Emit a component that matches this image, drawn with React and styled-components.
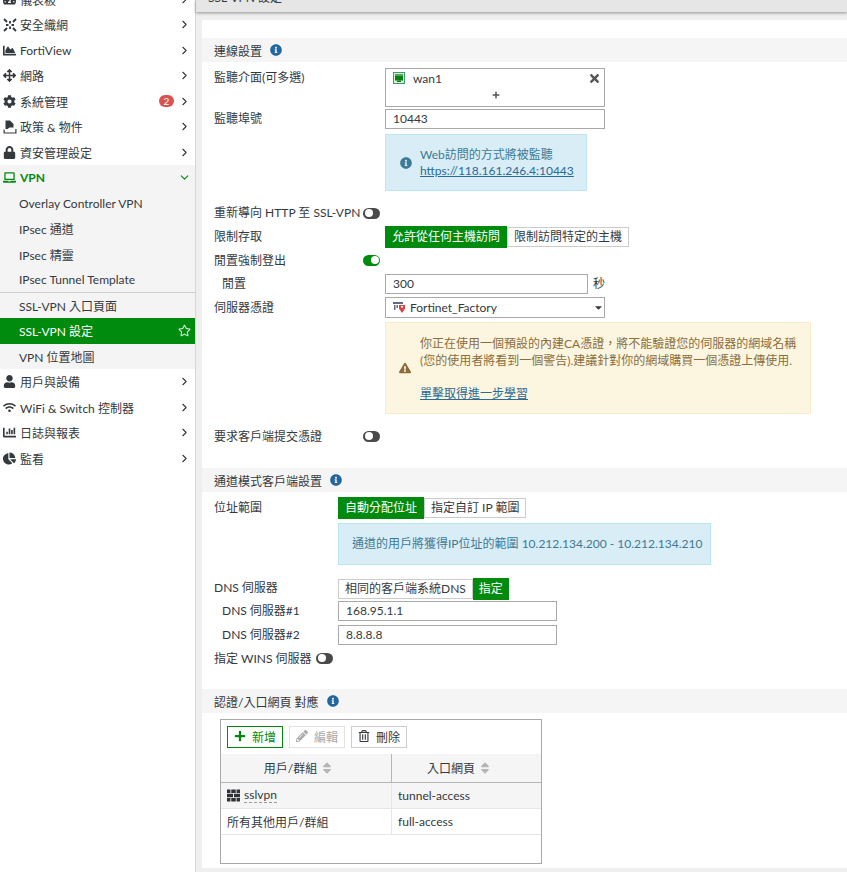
import React from 'react'
import styled, { createGlobalStyle } from 'styled-components'
import { ChevronRight, ChevronDown } from 'lucide-react'
import {
  FaCog, FaLock, FaLaptop, FaUser, FaWifi, FaChartBar, FaChartPie, FaChartArea, FaArrowsAlt,
  FaRegStar, FaInfoCircle, FaExclamationTriangle, FaTimes, FaPlus, FaPencilAlt, FaRegTrashAlt,
  FaSort, FaCaretDown, FaTachometerAlt,
} from 'react-icons/fa'

const GlobalStyle = createGlobalStyle`
  html, body { margin: 0; padding: 0; height: 100%; overflow: hidden; background: #fff; }
  body {
    font-family: Lato, "Noto Sans CJK TC", sans-serif;
    font-size: 12px;
    color: #34393d;
  }
  * { box-sizing: border-box; }
`

function FabricIcon() {
  return (
    <svg width="14" height="14" viewBox="0 0 14 14" fill="none" stroke="currentColor" strokeWidth="1.9">
      <path d="M1 1l3 3M13 1l-3 3M1 13l3-3M13 13l-3-3M7 3v2.5M7 8.5V11M3 7h2.5M8.5 7H11" />
    </svg>
  )
}

function PolicyIcon() {
  return (
    <svg width="14" height="14" viewBox="0 0 14 14" fill="currentColor">
      <path d="M2.5 .5H7l3.5 3.5v3.5H6.5L4.5 9H2.5z" />
      <path d="M.5 9.5h1.2v3h10.6V9H13.5v4.5H.5z" />
    </svg>
  )
}

function WanIcon() {
  return (
    <svg width="12" height="12" viewBox="0 0 12 12">
      <rect x="0.5" y="0.5" width="11" height="11" fill="#d8efd8" stroke="#3d9c6d" />
      <rect x="2" y="2" width="8" height="6.5" fill="#0d7f12" />
      <path d="M3 2v2M5 2v2M7 2v2M9 2v2" stroke="#bfe6bf" strokeWidth="0.8" />
      <rect x="4" y="8.5" width="4" height="1.5" fill="#0d7f12" />
    </svg>
  )
}

function CertIcon() {
  return (
    <svg width="13" height="12" viewBox="0 0 13 12">
      <rect x="0" y="0" width="10" height="2" fill="#5c6b80" />
      <path d="M1 3h1.5v5H1zM3.5 3H5v3H3.5z" fill="#5c6b80" />
      <path d="M6 3h6v3.5L9 11 6 6.5z" fill="#d8453e" />
      <circle cx="9" cy="4.8" r="1" fill="#fff" />
    </svg>
  )
}

function GroupIcon() {
  return (
    <svg width="13" height="13" viewBox="0 0 14 13" fill="#2f3337">
      <path d="M0 0h3.7v3.7H0zM4.6 0h4.8v3.7H4.6zM10.3 0H14v3.7h-3.7zM0 4.6h6.5v3.7H0zM7.5 4.6H14v3.7H7.5zM0 9.2h3.7V13H0zM4.6 9.2h4.8V13H4.6zM10.3 9.2H14V13h-3.7z" />
    </svg>
  )
}

const Page = styled.div`
  display: flex;
  height: 872px;
  overflow: hidden;
`

const Sidebar = styled.nav`
  width: 196px;
  flex: none;
  background: #fff;
  border-right: 1px solid #d6d6d6;
  margin-top: -13.5px;
`

const NavRow = styled.div`
  display: flex;
  align-items: center;
  height: 25.5px;
  padding-left: ${p => (p.$sub ? 19 : 2)}px;
  padding-right: 4px;
  background: ${p => (p.$active ? '#008a0e' : p.$open ? '#f4f4f4' : 'transparent')};
  color: ${p => (p.$active ? '#fff' : p.$green ? '#008a0e' : '#34393d')};
  font-weight: ${p => (p.$green ? 700 : 400)};
  border-bottom: ${p => (p.$rule ? '1px solid #cfcfcf' : 'none')};
  white-space: nowrap;
`

const NavIcon = styled.span`
  width: 15px;
  flex: none;
  margin-right: 3px;
  display: flex;
  align-items: center;
  justify-content: center;
  font-size: 13px;
`

const NavLabel = styled.span`
  flex: 1;
`

const Badge = styled.span`
  width: 15px;
  height: 12px;
  border-radius: 6px;
  background: #d9534f;
  color: #fff;
  font-size: 10px;
  line-height: 12px;
  text-align: center;
  margin-right: 4px;
`

const Main = styled.main`
  flex: 1;
  min-width: 0;
  background: #efefef;
  display: flex;
  flex-direction: column;
`

const TopBar = styled.div`
  height: 12px;
  flex: none;
  background: #e6e6e6;
  box-shadow: 0 1px 3px rgba(0, 0, 0, 0.4);
  padding-left: 12px;
  overflow: hidden;
  & > span { display: block; line-height: 13px; margin-top: -9px; }
`

const Panel = styled.div`
  margin: 8px 0 0 6px;
  background: #fff;
  padding-top: 18px;
  height: 848px;
`

const SectionHead = styled.div`
  display: flex;
  align-items: center;
  gap: 8px;
  height: 24px;
  padding-left: 12px;
  background: #f5f5f5;
  margin-top: ${p => p.$top || 0}px;
  & svg { color: #22669e; font-size: 12px; }
`

const Row = styled.div`
  display: grid;
  grid-template-columns: ${p => p.$col}px auto;
  justify-content: start;
  align-items: start;
  padding-left: ${p => (p.$indent ? 20 : 12)}px;
  margin-top: ${p => p.$top || 0}px;
`

const Label = styled.div`
  line-height: ${p => p.$lh || 20}px;
  white-space: nowrap;
`

const Field = styled.div`
  width: ${p => p.$w}px;
  height: 20px;
  border: 1px solid #a9a9a9;
  padding-left: 7px;
  line-height: 18px;
  background: #fff;
`

const MultiBox = styled.div`
  width: 220px;
  height: 39px;
  border: 1px solid #a9a9a9;
  display: flex;
  flex-direction: column;
  padding: 2px 3px 0 7px;
`

const MultiLine = styled.div`
  display: flex;
  align-items: center;
  gap: 8px;
  height: 14px;
  & > span { flex: 1; }
  & > svg:last-child { color: #555; font-size: 13px; }
`

const PlusLine = styled.div`
  display: flex;
  justify-content: center;
  margin-top: 6px;
  padding-right: 3px;
  color: #555;
  font-size: 8px;
`

const Note = styled.div`
  width: ${p => p.$w}px;
  height: ${p => p.$h}px;
  padding-left: ${p => p.$pad || 14}px;
  padding-right: 6px;
  display: flex;
  align-items: center;
  gap: ${p => p.$gap || 8}px;
  background: ${p => (p.$warn ? '#fcf6e1' : '#d9edf6')};
  border: 1px solid ${p => (p.$warn ? '#f8eccb' : '#bce6f1')};
  color: ${p => (p.$warn ? '#8a6d3b' : '#3c7a96')};
  & > svg { flex: none; font-size: 12px; }
  & a { color: #2a6a96; text-decoration: underline; }
`

const NoteText = styled.div`
  line-height: ${p => p.$lh || 16}px;
  padding-top: ${p => p.$top || 0}px;
  white-space: nowrap;
`

const Toggle = styled.span`
  display: inline-block;
  position: relative;
  flex: none;
  width: 17px;
  height: 11px;
  border-radius: 6px;
  background: ${p => (p.$on ? '#008a0e' : '#4a4a4a')};
  &::after {
    content: '';
    position: absolute;
    top: 1.5px;
    left: ${p => (p.$on ? 7.5 : 1.5)}px;
    width: 8px;
    height: 8px;
    border-radius: 50%;
    background: #fff;
  }
`

const ToggleRow = styled.div`
  display: flex;
  align-items: center;
  height: 20px;
  padding-left: 12px;
  margin-top: ${p => p.$top || 0}px;
  white-space: nowrap;
`

const ToggleLabel = styled.span`
  flex: none;
  width: ${p => p.$w}px;
  margin-top: ${p => (p.$up ? -4 : -2)}px;
`

const Segments = styled.div`
  display: flex;
  height: 22px;
`

const Segment = styled.div`
  padding: 0 ${p => p.$pad || 6}px;
  line-height: ${p => (p.$on ? 22 : 18)}px;
  height: ${p => (p.$on ? 22 : 20)}px;
  margin-top: ${p => (p.$on ? 0 : 1)}px;
  background: ${p => (p.$on ? '#008a0e' : '#fff')};
  color: ${p => (p.$on ? '#fff' : '#34393d')};
  border: ${p => (p.$on ? 'none' : '1px solid #ccc')};
  white-space: nowrap;
`

const SelectBox = styled(Field)`
  width: 220px;
  height: 21px;
  display: flex;
  align-items: center;
  gap: 4px;
  & > span { flex: 1; }
`

const Unit = styled.span`
  margin-left: 5px;
  line-height: 20px;
`

const InlineField = styled.div`
  display: flex;
  align-items: center;
  margin-left: -8px;
`

const TableBox = styled.div`
  width: 322px;
  height: 145px;
  margin: 6px 0 0 18px;
  border: 1px solid #a9a9a9;
`

const Toolbar = styled.div`
  display: flex;
  gap: 6px;
  height: 34px;
  padding: 6px 0 0 6px;
`

const ToolButton = styled.div`
  width: 56px;
  height: 22px;
  padding-bottom: 2px;
  display: flex;
  align-items: center;
  justify-content: center;
  gap: 6px;
  border: 1px solid ${p => (p.$primary ? '#008a0e' : p.$off ? '#e3e3e3' : '#ccc')};
  color: ${p => (p.$primary ? '#008a0e' : p.$off ? '#a9a9a9' : '#34393d')};
  & > svg { font-size: 12px; }
`

const TableRow = styled.div`
  display: grid;
  grid-template-columns: 171px 1fr;
  height: ${p => p.$h || 26}px;
  background: ${p => (p.$shade ? '#f5f5f5' : '#fff')};
  border-bottom: 1px solid ${p => (p.$head ? '#b5b5b5' : '#e6e6e6')};
`

const Cell = styled.div`
  display: flex;
  align-items: center;
  gap: 4px;
  padding-left: 6px;
  border-right: ${p => (p.$line ? '1px solid #e6e6e6' : 'none')};
`

const HeadCell = styled.div`
  display: flex;
  align-items: center;
  justify-content: center;
  gap: 3px;
  padding: 0 14px 1px 0;
  border-right: ${p => (p.$line ? '1px solid #b5b5b5' : 'none')};
  & > svg { color: #b5b5b5; font-size: 14px; }
`

const Dotted = styled.span`
  border-bottom: 1px dashed #9a9a9a;
  line-height: 14px;
`

const items = [
  { icon: <FaTachometerAlt />, label: '儀表板' },
  { icon: <FabricIcon />, label: '安全織網' },
  { icon: <FaChartArea />, label: 'FortiView' },
  { icon: <FaArrowsAlt />, label: '網路' },
  { icon: <FaCog />, label: '系統管理', badge: 2 },
  { icon: <PolicyIcon />, label: '政策 & 物件' },
  { icon: <FaLock />, label: '資安管理設定' },
]

const vpnSub = [
  { label: 'Overlay Controller VPN' },
  { label: 'IPsec 通道' },
  { label: 'IPsec 精靈' },
  { label: 'IPsec Tunnel Template', rule: true },
  { label: 'SSL-VPN 入口頁面' },
  { label: 'SSL-VPN 設定', active: true },
  { label: 'VPN 位置地圖' },
]

const lowerItems = [
  { icon: <FaUser />, label: '用戶與設備' },
  { icon: <FaWifi />, label: 'WiFi & Switch 控制器' },
  { icon: <FaChartBar />, label: '日誌與報表' },
  { icon: <FaChartPie />, label: '監看' },
]

function NavItem({ icon, label, badge }) {
  return (
    <NavRow>
      <NavIcon>{icon}</NavIcon>
      <NavLabel>{label}</NavLabel>
      {badge && <Badge>{badge}</Badge>}
      <ChevronRight size={13} strokeWidth={2} />
    </NavRow>
  )
}

export default function App() {
  return (
    <>
      <GlobalStyle />
      <Page>
        <Sidebar>
          {items.map(item => <NavItem key={item.label} {...item} />)}
          <NavRow $open $green>
            <NavIcon><FaLaptop /></NavIcon>
            <NavLabel>VPN</NavLabel>
            <ChevronDown size={13} strokeWidth={2} />
          </NavRow>
          {vpnSub.map(sub => (
            <NavRow key={sub.label} $sub $open={!sub.active} $active={sub.active} $rule={sub.rule}>
              <NavLabel>{sub.label}</NavLabel>
              {sub.active && <FaRegStar size={13} color="#cfe8cf" />}
            </NavRow>
          ))}
          {lowerItems.map(item => <NavItem key={item.label} {...item} />)}
        </Sidebar>

        <Main>
          <TopBar><span>SSL-VPN 設定</span></TopBar>
          <Panel>
            <SectionHead>連線設置 <FaInfoCircle /></SectionHead>

            <Row $col={171} $top={6}>
              <Label>監聽介面(可多選)</Label>
              <MultiBox>
                <MultiLine>
                  <WanIcon />
                  <span>wan1</span>
                  <FaTimes />
                </MultiLine>
                <PlusLine><FaPlus /></PlusLine>
              </MultiBox>
            </Row>
            <Row $col={171} $top={2}>
              <Label>監聽埠號</Label>
              <Field $w={220}>10443</Field>
            </Row>
            <Row $col={171} $top={5}>
              <span />
              <Note $w={202} $h={57}>
                <FaInfoCircle />
                <NoteText>
                  Web訪問的方式將被監聽<br />
                  <a>https://118.161.246.4:10443</a>
                </NoteText>
              </Note>
            </Row>

            <ToggleRow $top={12}>
              <ToggleLabel $w={149} $up>重新導向 HTTP 至 SSL-VPN</ToggleLabel>
              <Toggle />
            </ToggleRow>
            <Row $col={171} $top={3}>
              <Label $lh={22}>限制存取</Label>
              <Segments>
                <Segment $on $pad={7}>允許從任何主機訪問</Segment>
                <Segment>限制訪問特定的主機</Segment>
              </Segments>
            </Row>
            <ToggleRow $top={2}>
              <ToggleLabel $w={149}>閒置強制登出</ToggleLabel>
              <Toggle $on />
            </ToggleRow>
            <Row $col={171} $indent $top={4}>
              <Label>閒置</Label>
              <InlineField>
                <Field $w={203}>300</Field>
                <Unit>秒</Unit>
              </InlineField>
            </Row>
            <Row $col={171} $top={3}>
              <Label $lh={21}>伺服器憑證</Label>
              <SelectBox>
                <CertIcon />
                <span>Fortinet_Factory</span>
                <FaCaretDown size={11} />
              </SelectBox>
            </Row>
            <Row $col={171} $top={4}>
              <span />
              <Note $warn $w={426} $h={92} $pad={13} $gap={9}>
                <FaExclamationTriangle />
                <NoteText $lh={16.5} $top={2}>
                  你正在使用一個預設的內建CA憑證，將不能驗證您的伺服器的網域名稱<br />
                  (您的使用者將看到一個警告).建議針對你的網域購買一個憑證上傳使用.<br />
                  <br />
                  <a>單擊取得進一步學習</a>
                </NoteText>
              </Note>
            </Row>
            <ToggleRow $top={12}>
              <ToggleLabel $w={149}>要求客戶端提交憑證</ToggleLabel>
              <Toggle />
            </ToggleRow>

            <SectionHead $top={22}>通道模式客戶端設置 <FaInfoCircle /></SectionHead>
            <Row $col={124} $top={5}>
              <Label $lh={22}>位址範圍</Label>
              <Segments>
                <Segment $on $pad={7}>自動分配位址</Segment>
                <Segment>指定自訂 IP 範圍</Segment>
              </Segments>
            </Row>
            <Row $col={124} $top={4}>
              <span />
              <Note $w={373} $h={42} $pad={13}>
                <NoteText>通道的用戶將獲得IP位址的範圍 10.212.134.200 - 10.212.134.210</NoteText>
              </Note>
            </Row>
            <Row $col={124} $top={13}>
              <Label>DNS 伺服器</Label>
              <Segments>
                <Segment>相同的客戶端系統DNS</Segment>
                <Segment $on>指定</Segment>
              </Segments>
            </Row>
            <Row $col={116} $indent $top={1}>
              <Label>DNS 伺服器#1</Label>
              <Field $w={219}>168.95.1.1</Field>
            </Row>
            <Row $col={116} $indent $top={4}>
              <Label>DNS 伺服器#2</Label>
              <Field $w={219}>8.8.8.8</Field>
            </Row>
            <ToggleRow $top={3}>
              <ToggleLabel $w={102}>指定 WINS 伺服器</ToggleLabel>
              <Toggle />
            </ToggleRow>

            <SectionHead $top={21}>認證/入口網頁 對應 <FaInfoCircle /></SectionHead>
            <TableBox>
              <Toolbar>
                <ToolButton $primary><FaPlus />新增</ToolButton>
                <ToolButton $off><FaPencilAlt />編輯</ToolButton>
                <ToolButton><FaRegTrashAlt />刪除</ToolButton>
              </Toolbar>
              <TableRow $head $shade $h={29}>
                <HeadCell $line>用戶/群組<FaSort /></HeadCell>
                <HeadCell>入口網頁<FaSort /></HeadCell>
              </TableRow>
              <TableRow $shade>
                <Cell $line><GroupIcon /><Dotted>sslvpn</Dotted></Cell>
                <Cell>tunnel-access</Cell>
              </TableRow>
              <TableRow>
                <Cell $line>所有其他用戶/群組</Cell>
                <Cell>full-access</Cell>
              </TableRow>
            </TableBox>
          </Panel>
        </Main>
      </Page>
    </>
  )
}
